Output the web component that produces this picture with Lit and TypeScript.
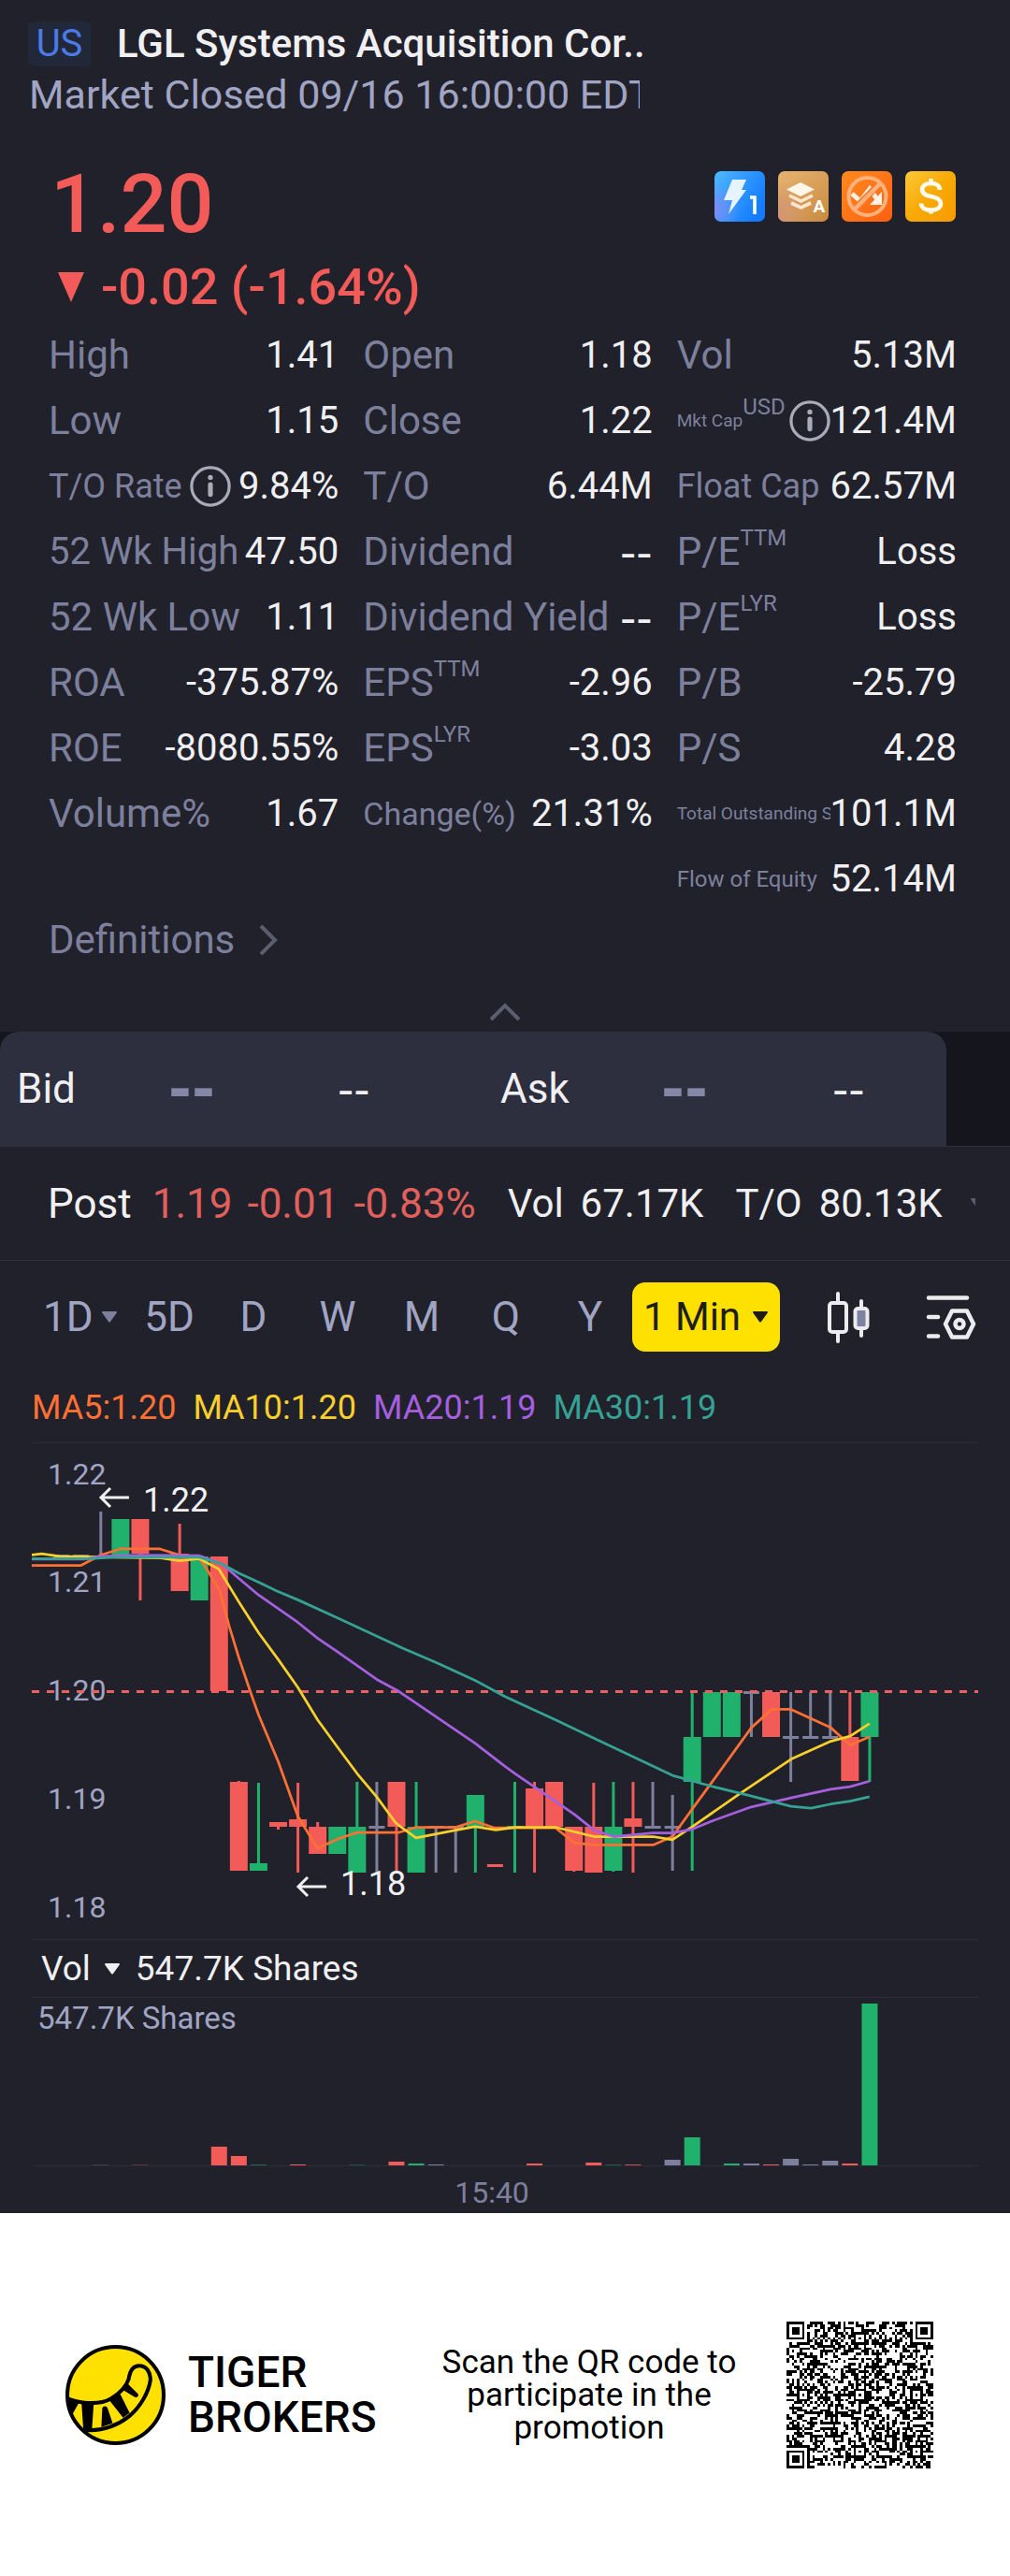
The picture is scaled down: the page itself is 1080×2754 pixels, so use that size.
import { LitElement, html, svg, css, nothing } from "lit";
import { customElement, state } from "lit/decorators.js";

const RED = "#f25b57";
const GREEN = "#20b26c";
const GREY = "#7d809c";

type Stat = {
  label: string;
  value: string;
  size?: string;
  sup?: string;
  info?: boolean;
};

const STATS: Stat[][] = [
  [
    { label: "High", value: "1.41" },
    { label: "Low", value: "1.15" },
    { label: "T/O Rate", value: "9.84%", size: "s36", info: true },
    { label: "52 Wk High", value: "47.50", size: "s40" },
    { label: "52 Wk Low", value: "1.11" },
    { label: "ROA", value: "-375.87%" },
    { label: "ROE", value: "-8080.55%" },
    { label: "Volume%", value: "1.67" },
  ],
  [
    { label: "Open", value: "1.18" },
    { label: "Close", value: "1.22" },
    { label: "T/O", value: "6.44M" },
    { label: "Dividend", value: "--" },
    { label: "Dividend Yield", value: "--" },
    { label: "EPS", sup: "TTM", value: "-2.96" },
    { label: "EPS", sup: "LYR", value: "-3.03" },
    { label: "Change(%)", value: "21.31%", size: "s34" },
  ],
  [
    { label: "Vol", value: "5.13M" },
    { label: "Mkt Cap", sup: "USD", value: "121.4M", size: "s19", info: true },
    { label: "Float Cap", value: "62.57M", size: "s36" },
    { label: "P/E", sup: "TTM", value: "Loss" },
    { label: "P/E", sup: "LYR", value: "Loss" },
    { label: "P/B", value: "-25.79" },
    { label: "P/S", value: "4.28" },
    { label: "Total Outstanding Shares", value: "101.1M", size: "s19" },
    { label: "Flow of Equity", value: "52.14M", size: "s24" },
  ],
];

// [slot, colour, high, low, body top, body bottom]
type Candle = [number, string, number, number, number, number];
const CANDLES: Candle[] = [
  [-2, GREY, 120, 121, 120, 121],
  [-1, GREY, 120, 121, 120, 121],
  [0, GREY, 73, 121, 121, 121],
  [1, GREEN, 81, 120, 81, 120],
  [2, RED, 81, 168, 81, 118],
  [4, RED, 86, 158, 118, 158],
  [5, GREEN, 121, 168, 121, 168],
  [6, RED, 121, 265, 121, 265],
  [7, RED, 361, 457, 362, 457],
  [8, GREEN, 363, 457, 449, 457],
  [9, RED, 405, 413, 405, 410],
  [10, RED, 363, 459, 402, 410],
  [11, RED, 405, 439, 410, 439],
  [12, GREEN, 410, 439, 410, 439],
  [13, GREEN, 362, 459, 410, 459],
  [14, GREY, 362, 459, 410, 410],
  [15, RED, 362, 459, 362, 410],
  [16, GREEN, 362, 459, 410, 459],
  [17, GREY, 410, 459, 410, 410],
  [18, GREY, 410, 459, 410, 410],
  [19, GREEN, 376, 459, 376, 410],
  [20, RED, 451, 451, 451, 451],
  [21, GREEN, 362, 459, 410, 410],
  [22, RED, 362, 459, 369, 410],
  [23, RED, 362, 410, 362, 410],
  [24, RED, 410, 458, 410, 457],
  [25, RED, 363, 459, 410, 459],
  [26, GREEN, 362, 458, 410, 457],
  [27, RED, 362, 459, 401, 410],
  [28, GREY, 362, 410, 410, 410],
  [29, GREY, 376, 457, 410, 410],
  [30, GREEN, 266, 457, 314, 362],
  [31, GREEN, 266, 314, 266, 314],
  [32, GREEN, 266, 314, 266, 314],
  [33, GREY, 266, 314, 266, 266],
  [34, RED, 266, 314, 266, 314],
  [35, GREY, 266, 362, 314, 314],
  [36, GREY, 266, 314, 314, 314],
  [37, GREY, 266, 314, 314, 314],
  [38, RED, 266, 361, 314, 361],
  [39, GREEN, 266, 362, 266, 314],
];

// [slot, colour, height, opacity]
const VOLUMES: [number, string, number, number][] = [
  [0, GREY, 1, 0.3], [2, RED, 1, 0.3], [6, RED, 20, 1], [7, RED, 10, 1],
  [8, GREEN, 1, 0.5], [10, RED, 1, 1], [13, GREEN, 1, 0.3], [15, RED, 4, 1],
  [16, GREEN, 2, 1], [17, GREY, 1, 1], [22, RED, 2, 1], [25, RED, 3, 1],
  [26, GREEN, 1, 0.4], [27, RED, 1, 0.8], [29, GREY, 6, 1], [30, GREEN, 30, 1],
  [32, GREEN, 2, 1], [33, GREY, 2, 1], [34, RED, 1, 1], [35, GREY, 7, 1],
  [36, GREY, 1, 1], [37, GREY, 5, 1], [38, RED, 2, 1], [39, GREEN, 173, 1],
];

const MOVING_AVERAGES: [string, string, string][] = [
  ["MA5:1.20", "#ff7034",
    "99,416 252,416 313,384 374,365 497,365 558,384 600,390 625,400 682,493 712,605 741,700 780,815 803,880 864,1025 925,1195 986,1294 1048,1266 1109,1245 1240,1245 1292,1229 1415,1229 1475,1210 1536,1231 1599,1231 1725,1231 1785,1278 1845,1284 2028,1284 2088,1258 2150,1172 2210,1090 2333,920 2396,863 2456,863 2580,920 2640,974 2700,948"],
  ["MA10:1.20", "#f8cf2c",
    "99,384 130,380 185,388 313,390 500,393 558,402 619,395 680,428 741,528 803,625 864,708 925,795 986,895 1048,980 1109,1062 1170,1135 1231,1218 1292,1262 1415,1238 1475,1227 1540,1237 1599,1229 1725,1229 1845,1258 1905,1258 2028,1258 2088,1268 2150,1227 2290,1130 2456,1018 2580,962 2640,946 2700,907"],
  ["MA20:1.19", "#a55fdf",
    "99,397 260,397 313,388 374,386 440,384 620,386 690,412 741,456 803,508 925,593 986,642 1048,684 1170,770 1240,808 1475,968 1568,1040 1599,1062 1735,1155 1785,1190 1845,1238 1905,1258 2028,1247 2088,1247 2150,1235 2210,1210 2333,1166 2456,1138 2580,1111 2640,1103 2700,1086"],
  ["MA30:1.19", "#35a294",
    "99,395 280,395 350,391 619,391 690,412 741,440 803,468 860,496 925,523 1050,580 1250,673 1360,720 1475,773 1568,823 1730,898 1850,955 2088,1068 2210,1102 2333,1132 2456,1164 2518,1170 2580,1157 2640,1148 2700,1134"],
];

const slotX = (i: number) => 73.8 + 21.08 * i;

const buildCode = (): string => {
  const n = 57;
  let seed = 20211;
  const rand = () => {
    seed = (seed * 1103515245 + 12345) % 2147483648;
    return seed / 2147483648;
  };
  const grid = Array.from({ length: n }, () =>
    Array.from({ length: n }, () => rand() < 0.5),
  );
  const square = (cx: number, cy: number, outer: number) => {
    for (let y = -outer; y <= outer; y++)
      for (let x = -outer; x <= outer; x++) {
        const row = grid[cy + y];
        if (!row || cx + x < 0 || cx + x >= n) continue;
        const d = Math.max(Math.abs(x), Math.abs(y));
        row[cx + x] = outer === 4 ? d !== 4 && d !== 2 : d !== 1;
      }
  };
  for (let i = 0; i < n; i++) {
    grid[6][i] = i % 2 === 0;
    grid[i][6] = i % 2 === 0;
  }
  for (const y of [6, 28, 50])
    for (const x of [6, 28, 50]) square(x, y, 2);
  square(3, 3, 4);
  square(n - 4, 3, 4);
  square(3, n - 4, 4);
  return grid
    .map((row, y) => row.map((on, x) => (on ? `M${x} ${y}h1v1h-1z` : "")).join(""))
    .join("");
};
const CODE_PATH = buildCode();

const PERIODS = ["1D", "5D", "D", "W", "M", "Q", "Y"];

@customElement("app-root")
export class AppRoot extends LitElement {
  @state() private period = "1 Min";

  static styles = css`
    :host {
      display: block;
      background: #21212b;
      color: #f0f0f2;
      font-family: Roboto, "Liberation Sans", sans-serif;
      font-size: 42px;
      line-height: 1;
    }
    * { box-sizing: border-box; }
    svg { display: block; flex: none; }
    button {
      font: inherit;
      color: inherit;
      background: none;
      border: 0;
      padding: 0;
      cursor: pointer;
    }
    a { color: inherit; text-decoration: none; }
    h1, p, dl, dd, dt { margin: 0; font-weight: 400; }

    .head { width: 684px; max-width: 100%; padding: 22px 0 0 30px; }
    .title { display: flex; align-items: center; gap: 28px; height: 50px; }
    .market {
      flex: none;
      background: #21283a;
      color: #4c7ae6;
      border-radius: 6px;
      width: 67px;
      line-height: 48px;
      text-align: center;
      font-size: 40px;
    }
    .name { font-size: 42px; font-weight: 500; white-space: nowrap; }
    .status {
      color: #a1a5c4;
      font-size: 43px;
      line-height: 58px;
      padding-left: 1px;
      white-space: nowrap;
      overflow: hidden;
    }

    .quote {
      display: flex;
      justify-content: space-between;
      align-items: flex-start;
      padding: 38px 58px 0 54px;
      color: #f25b57;
    }
    .price { font-size: 88px; font-weight: 500; line-height: 100px; }
    .badges { display: flex; gap: 14px; padding-top: 15px; }
    .change {
      display: flex;
      align-items: center;
      gap: 18px;
      padding-left: 62px;
      height: 77px;
      color: #f25b57;
      font-size: 54px;
      font-weight: 500;
    }

    .stats {
      display: grid;
      grid-template-columns: minmax(0, 310fr) minmax(0, 309fr) minmax(0, 299fr);
      gap: 26px;
      padding: 0 57px 0 52px;
    }
    .stat {
      display: flex;
      align-items: center;
      justify-content: space-between;
      height: 70px;
      white-space: nowrap;
    }
    .stat dt {
      flex: 1 1 0;
      min-width: 0;
      display: flex;
      align-items: center;
      color: #7d809c;
      overflow: hidden;
      line-height: 70px;
    }
    .stat dt svg { margin-left: 8px; }
    .stat dt .sup + svg { margin-left: auto; }
    .stat dd { font-size: 40px; }
    .s40 { font-size: 40px; }
    .s36 { font-size: 36px; }
    .s34 { font-size: 34px; }
    .s24 { font-size: 24px; }
    .s19 { font-size: 19px; }
    .sup { font-size: 24px; align-self: flex-start; line-height: 40px; }
    .stat .dash, .dash { font-family: "DejaVu Sans", sans-serif; font-size: 48px; }

    .more {
      display: flex;
      align-items: center;
      gap: 26px;
      height: 60px;
      padding-left: 52px;
      color: #7d809c;
    }
    .fold {
      display: flex;
      width: 100%;
      justify-content: center;
      align-items: flex-end;
      height: 68px;
      padding-bottom: 11px;
    }

    .book {
      background: #15151d;
      border-bottom: 1px solid #2e2f3f;
      padding-right: 68px;
    }
    .book-bar {
      display: grid;
      grid-template-columns: 162fr 181fr 174fr 172fr 183fr 122fr;
      align-items: center;
      height: 122px;
      padding-left: 18px;
      background: #2d2e3e;
      border-radius: 20px 20px 0 0;
      font-size: 44px;
    }
    .dash.dim { color: #8488a6; font-weight: 700; font-size: 60px; }

    .post {
      display: flex;
      align-items: center;
      height: 122px;
      padding: 0 37px 0 51px;
      border-bottom: 1px solid #2e2f3f;
      font-size: 44px;
      white-space: nowrap;
      overflow: hidden;
    }
    .post .down { color: #e0605c; display: flex; gap: 16px; padding: 0 34px 0 22px; }
    .post .pair { display: flex; gap: 18px; font-size: 42px; }
    .post .pair + .pair { margin-left: 34px; }
    .peek { flex: none; overflow: hidden; width: 6px; margin-left: auto; }

    .tabs {
      display: flex;
      align-items: center;
      height: 120px;
      padding: 0 36px 0 46px;
      color: #a1a5c4;
      font-size: 44px;
    }
    .periods { display: grid; grid-template-columns: repeat(7, 1fr); flex: 1; }
    .tab { display: flex; align-items: center; justify-content: center; gap: 8px; }
    .tab:first-child { justify-content: flex-start; }
    .tab.on { color: #fff; }
    .minute {
      display: flex;
      align-items: center;
      justify-content: center;
      gap: 12px;
      width: 158px;
      height: 74px;
      border-radius: 14px;
      background: #ffe100;
      color: #1d1d16;
      font-size: 42px;
    }
    .tool { margin-left: 50px; }
    .tool + .tool { margin-left: 60px; }

    .panel { padding: 0 34px; }
    .averages {
      display: flex;
      gap: 18px;
      height: 75px;
      line-height: 74px;
      border-bottom: 1px solid #2c2d3b;
      font-size: 36px;
    }
    .plot { width: 100%; height: auto; }
    .volume-head {
      display: flex;
      align-items: center;
      gap: 16px;
      height: 63px;
      padding-left: 10px;
      border: solid #2c2d3b;
      border-width: 1px 0;
      font-size: 37px;
    }
    .volume-head button { display: flex; align-items: center; gap: 14px; }
    .axis { font-size: 32px; fill: #a1a5c4; }
    .axis.wide { font-size: 33px; }
    .mark { font-size: 36px; fill: #f0f0f2; }
    .clock { font-size: 32px; fill: #7d809c; }

    .footer {
      display: flex;
      align-items: center;
      height: 388px;
      padding: 0 82px 0 70px;
      background: #fff;
      color: #000;
    }
    .brand {
      display: flex;
      align-items: center;
      gap: 24px;
      font-size: 46px;
      font-weight: 500;
      line-height: 48px;
    }
    .invite {
      width: 330px;
      margin: 0 46px 0 auto;
      text-align: center;
      font-size: 35px;
      line-height: 35px;
    }
  `;

  private info() {
    return html`<svg width="44" height="44" viewBox="0 0 46 46" fill="none" aria-hidden="true">
      <circle cx="23" cy="23" r="21" stroke="#a9abb8" stroke-width="3.4"></circle>
      <circle cx="23" cy="13" r="2.8" fill="#a9abb8"></circle>
      <path d="M23 21v11" stroke="#a9abb8" stroke-width="5.4" stroke-linecap="round"></path>
    </svg>`;
  }

  private caret(color: string) {
    return html`<svg width="18" height="14" viewBox="0 0 18 14" aria-hidden="true">
      <path d="M2 1h14a1 1 0 0 1 .8 1.6L10 12a1.4 1.4 0 0 1-2 0L1.200 2.600A1 1 0 0 1 2 1z" fill=${color}></path>
    </svg>`;
  }

  private stat(s: Stat) {
    return html`<div class="stat">
      <dt>
        <span class=${s.size ?? ""}>${s.label}</span>
        ${s.sup ? html`<span class="sup">${s.sup}</span>` : nothing}
        ${s.info ? this.info() : nothing}
      </dt>
      <dd class=${s.value === "--" ? "dash" : ""}>${s.value}</dd>
    </div>`;
  }

  private badges() {
    return html`
      <svg width="54" height="54" viewBox="0 0 54 54" role="img" aria-label="Level 1">
        <defs>
          <linearGradient id="blue" x1="0" y1="0" x2="1" y2=".6">
            <stop offset="0" stop-color="#4fb8ff"></stop><stop offset="1" stop-color="#137bff"></stop>
          </linearGradient>
          <radialGradient id="violet" cx="0" cy=".75" r=".5">
            <stop offset="0" stop-color="#7e8cf5"></stop><stop offset="1" stop-color="#7e8cf5" stop-opacity="0"></stop>
          </radialGradient>
        </defs>
        <rect width="54" height="54" rx="7" fill="url(#blue)"></rect>
        <rect width="54" height="54" rx="7" fill="url(#violet)"></rect>
        <path d="M19 9h15l-5 11h5L15 46l4-15h-9z" fill="#e6f4ff"></path>
        <path d="M38 28h5v18" fill="none" stroke="#fff" stroke-width="3.6"></path>
      </svg>
      <svg width="54" height="54" viewBox="0 0 54 54" role="img" aria-label="A shares">
        <defs>
          <linearGradient id="tan" x1=".2" y1="0" x2="1" y2="1">
            <stop offset="0" stop-color="#e3b06c"></stop><stop offset="1" stop-color="#c98a40"></stop>
          </linearGradient>
          <radialGradient id="rose" cx="0" cy=".8" r=".6">
            <stop offset="0" stop-color="#d49676"></stop><stop offset="1" stop-color="#d49676" stop-opacity="0"></stop>
          </radialGradient>
        </defs>
        <rect width="54" height="54" rx="7" fill="url(#tan)"></rect>
        <rect width="54" height="54" rx="7" fill="url(#rose)"></rect>
        <path d="M24 12l15 7.500-15 7.500-15-7.500z" fill="#fff6ea"></path>
        <path d="M12 26l12.500 6L37 26M14 34l10.500 5L35 34" fill="none" stroke="#fbe7cd" stroke-width="3.600"></path>
        <text x="44" y="44" text-anchor="middle" font-size="19" font-weight="700" fill="#fff">A</text>
      </svg>
      <svg width="54" height="54" viewBox="0 0 54 54" role="img" aria-label="No short selling">
        <defs>
          <linearGradient id="orange" x1="0" y1="0" x2="1" y2="1">
            <stop offset="0" stop-color="#ff8a1e"></stop><stop offset="1" stop-color="#ff5f10"></stop>
          </linearGradient>
        </defs>
        <rect width="54" height="54" rx="7" fill="url(#orange)"></rect>
        <path d="M11 24l9 8 10-13 8 11" fill="none" stroke="#fff1e6" stroke-width="5"></path>
        <path d="M43 22v14H30z" fill="#fff1e6"></path>
        <path d="M12.500 41.500l29-29" stroke="#ff7a28" stroke-width="7"></path>
        <circle cx="27.500" cy="27" r="20" fill="none" stroke="#ffb27c" stroke-width="4"></circle>
        <path d="M13.500 41l28-28" stroke="#ffb27c" stroke-width="4"></path>
      </svg>
      <svg width="54" height="54" viewBox="0 0 54 54" role="img" aria-label="Margin">
        <defs>
          <linearGradient id="gold" x1="0" y1="0" x2="1" y2="1">
            <stop offset="0" stop-color="#fbc93a"></stop><stop offset=".5" stop-color="#f8aa05"></stop><stop offset="1" stop-color="#f79a00"></stop>
          </linearGradient>
        </defs>
        <rect width="54" height="54" rx="7" fill="url(#gold)"></rect>
        <path d="M37 20c0-4.500-4-7-9.500-7S18 15.500 18 20s4 6 9.500 7 10.500 3 10.500 7.500-4.500 7-10.500 7S17 39 17 34.500M27.500 8v5M27.500 41v4.500" fill="none" stroke="#fffaf0" stroke-width="4.600"></path>
      </svg>`;
  }

  private priceChart() {
    return html`<svg class="plot" viewBox="0 0 1012 530" role="img" aria-label="One minute candlestick chart">
      ${CANDLES.map(([i, color, high, low, top, bottom]) => {
        const x = slotX(i);
        const flat = bottom - top < 2;
        return svg`
          <rect x=${x - 1.5} y=${high} width="3" height=${Math.max(low - high, 1)} fill=${color}></rect>
          <rect x=${flat ? x - 8.5 : x - 9.5} y=${flat ? top - 1 : top} width=${flat ? 17 : 19}
            height=${flat ? 3 : bottom - top} fill=${color}></rect>`;
      })}
      ${[44, 159, 275, 391, 507].map(
        (y, n) => svg`<text class="axis" x="17" y=${y}>${(1.22 - n / 100).toFixed(2)}</text>`,
      )}
      <path d="M0 265.500H1012" stroke="#e8625f" stroke-width="3" stroke-dasharray="8 8"></path>
      <g transform="scale(.3444) translate(-99 -37)" fill="none" stroke-width="8" stroke-linejoin="round">
        ${MOVING_AVERAGES.map(([, color, points]) => svg`<polyline points=${points} stroke=${color}></polyline>`)}
      </g>
      <g fill="none" stroke="#f0f0f2" stroke-width="3">
        <path d="M104 58h-30M84 48l-10 10 10 10"></path>
        <path d="M315 474h-30M295 464l-10 10 10 10"></path>
      </g>
      <text class="mark" x="119" y="73">1.22</text>
      <text class="mark" x="330" y="483">1.18</text>
    </svg>`;
  }

  private volumeChart() {
    return html`<svg class="plot" viewBox="0 0 1012 230" role="img" aria-label="Volume chart">
      <text class="axis wide" x="6" y="33">547.7K Shares</text>
      <rect y="179" width="1012" height="1" fill="#2c2d3b"></rect>
      ${VOLUMES.map(
        ([i, color, h, o]) =>
          svg`<rect x=${slotX(i) - 8.5} y=${179 - h} width="17" height=${h} fill=${color} opacity=${o}></rect>`,
      )}
      <text class="clock" x="492" y="219" text-anchor="middle">15:40</text>
    </svg>`;
  }

  private brandMark() {
    return html`<svg width="107" height="107" viewBox="0 0 106 106" aria-hidden="true">
      <circle cx="53" cy="53" r="51" fill="#ffe100" stroke="#000" stroke-width="4"></circle>
      <path d="M3 57C16 62 36 64 48 57 58 51 64 45 67 36c1-7 4-14 11-14 8 0 12 7 12 15-2 14-11 29-23 39C54 86 38 92 19 90" fill="none" stroke="#000" stroke-width="4"></path>
      <path d="M2 56l13 4-8 14zM17 61h13l-2 30h-9zM39 67c1-3 5-3 6 1l5 15-12 4zM46 58l12-6 10 20-7 5zM60 47l6-6 11 11c1 3-2 4-4 3z"></path>
    </svg>`;
  }

  render() {
    return html`
      <header class="head">
        <div class="title">
          <span class="market">US</span>
          <h1 class="name">LGL Systems Acquisition Cor..</h1>
        </div>
        <p class="status">Market Closed 09/16 16:00:00 EDT</p>
      </header>

      <section>
        <div class="quote">
          <span class="price">1.20</span>
          <div class="badges">${this.badges()}</div>
        </div>
        <div class="change">
          <svg width="28" height="32" viewBox="0 0 28 32" aria-hidden="true"><path d="M0 0h28L14 32z" fill="#f25b57"></path></svg>
          <span>-0.02 (-1.64%)</span>
        </div>
      </section>

      <section class="stats">
        ${STATS.map((column) => html`<dl>${column.map((s) => this.stat(s))}</dl>`)}
      </section>

      <a class="more" href="#definitions">
        Definitions
        <svg width="20" height="34" viewBox="0 0 20 34" fill="none" aria-hidden="true"><path d="M2 2l15 15L2 32" stroke="#5b5d70" stroke-width="4"></path></svg>
      </a>
      <button class="fold" aria-label="Collapse">
        <svg width="34" height="20" viewBox="0 0 34 20" fill="none"><path d="M2 18L17 3l15 15" stroke="#5b5d70" stroke-width="4"></path></svg>
      </button>

      <section class="book">
        <div class="book-bar">
          <span>Bid</span><span class="dash dim">--</span><span class="dash">--</span>
          <span>Ask</span><span class="dash dim">--</span><span class="dash">--</span>
        </div>
      </section>

      <section class="post">
        <span>Post</span>
        <span class="down"><span>1.19</span><span>-0.01</span><span>-0.83%</span></span>
        <span class="pair"><span>Vol</span><span>67.17K</span></span>
        <span class="pair"><span>T/O</span><span>80.13K</span></span>
        <span class="peek">${this.caret("#5b5d70")}</span>
      </section>

      <nav class="tabs">
        <div class="periods">
          ${PERIODS.map(
            (p) => html`<button class="tab ${this.period === p ? "on" : ""}" @click=${() => (this.period = p)}>
              ${p}${p === "1D" ? this.caret("#7d809c") : nothing}
            </button>`,
          )}
        </div>
        <button class="minute" @click=${() => (this.period = "1 Min")}>1 Min ${this.caret("#1d1d16")}</button>
        <button class="tool" aria-label="Chart type">
          <svg width="46" height="56" viewBox="0 0 46 56" fill="none" stroke="#ececee" stroke-width="4" stroke-linecap="round">
            <path d="M12 3v10M12 44v10M37 11v8M37 40v8"></path>
            <rect x="3" y="13" width="18" height="31" rx="3"></rect>
            <rect x="30.500" y="19" width="13" height="21" rx="3" fill="#7d82a3"></rect>
          </svg>
        </button>
        <button class="tool" aria-label="Chart settings">
          <svg width="54" height="48" viewBox="0 0 54 48" fill="none" stroke="#ececee" stroke-width="4.500" stroke-linecap="round" stroke-linejoin="round">
            <path d="M3 3.500h41M3 24h10M3 44.500h10"></path>
            <path d="M28 17.500h16l7 14-7 14H28l-7-14z"></path>
            <circle cx="36" cy="31.500" r="4.500"></circle>
          </svg>
        </button>
      </nav>

      <section class="panel">
        <div class="averages">
          ${MOVING_AVERAGES.map(([label, color]) => html`<span style="color:${color}">${label}</span>`)}
        </div>
        ${this.priceChart()}
        <div class="volume-head">
          <button>Vol ${this.caret("#f0f0f2")}</button>
          <span>547.7K Shares</span>
        </div>
        ${this.volumeChart()}
      </section>

      <footer class="footer">
        <div class="brand">${this.brandMark()}<span>TIGER<br />BROKERS</span></div>
        <p class="invite">Scan the QR code to participate in the promotion</p>
        <svg width="157" height="157" viewBox="0 0 57 57" role="img" aria-label="QR code"><path d=${CODE_PATH} shape-rendering="crispEdges"></path></svg>
      </footer>
    `;
  }
}
